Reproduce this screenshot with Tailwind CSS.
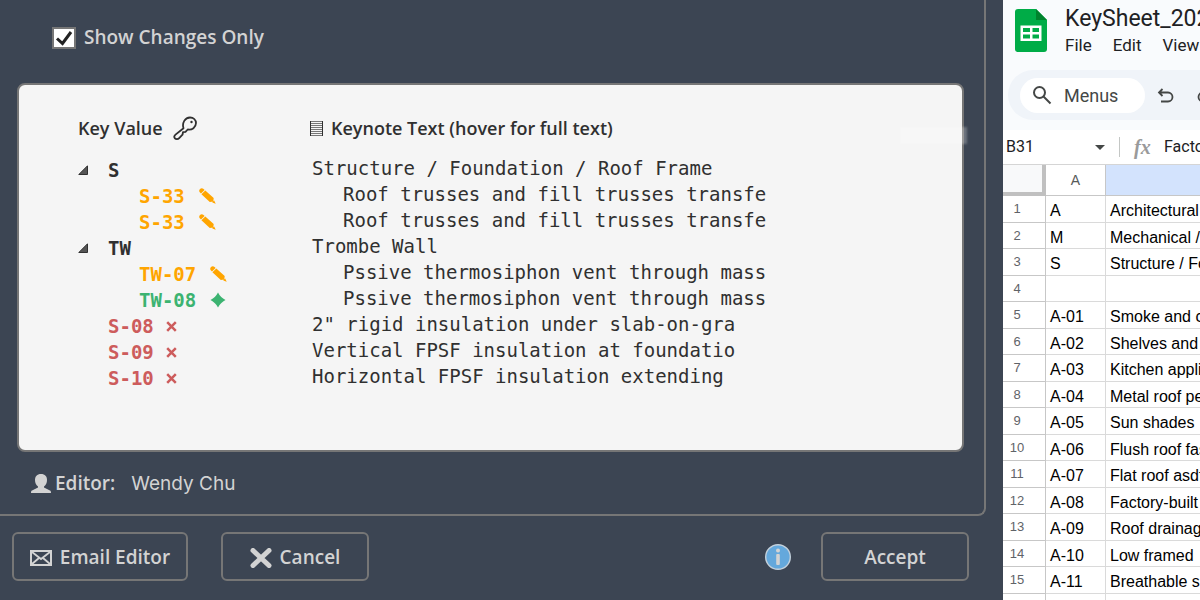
<!DOCTYPE html>
<html lang="en">
<head>
  <meta charset="UTF-8" />
  <meta name="viewport" content="width=device-width, initial-scale=1.0"/>
  <title>Keynote Changes</title>
  <script src="https://cdn.jsdelivr.net/npm/@tailwindcss/browser@4"></script>
</head>
<body class="flex h-screen overflow-hidden bg-white font-['Open_Sans','Noto_Sans',sans-serif]">

  <!-- Review dialog -->
  <main class="flex flex-1 flex-col min-w-0 bg-[#3c4553] text-[#d3d3d3] text-[19px] font-semibold">
    <section class="flex flex-1 flex-col mr-[17px] pl-[17px] pr-5 border-r-2 border-b-2 border-[#767676] rounded-br-lg">
      <div class="flex items-center h-[83px] pb-2 pl-[35px]">
        <span class="relative flex">
          <input id="changesOnly" type="checkbox" checked class="peer appearance-none w-6 h-[22px] bg-white border-2 border-[#767676]" />
          <svg class="absolute inset-0 w-6 h-[22px] pointer-events-none hidden peer-checked:block" viewBox="0 0 24 22" fill="none" stroke="#222" stroke-width="3">
            <path d="M5 11.500l5.500 5L19 5" />
          </svg>
        </span>
        <label for="changesOnly" class="pl-2">Show Changes Only</label>
      </div>

      <div class="relative flex-1 pt-7 pl-[59px] bg-[#f5f5f5] border-2 border-[#767676] rounded-lg text-[#303030]">
        <table class="w-full table-fixed text-left whitespace-nowrap">
          <colgroup>
            <col class="w-[234px]" />
            <col />
          </colgroup>
          <thead>
            <tr class="h-[30px] text-[18px]">
              <th class="p-0 font-semibold">
                <span class="flex items-center gap-2.5">Key Value
                  <svg class="w-6 h-6" viewBox="0 0 24 24" fill="none" stroke="#303030" stroke-width="1.8" stroke-linejoin="round">
                    <path d="M10.500 12.200C8.800 7 12 1.500 17 1.500c3.500 0 6 2.400 6 5.600 0 4.200-4 7.200-8.300 6.400l-2.200 2.300-2.500.4-.5 2.500-3.300 3.400c-1.300 1.300-3.400 1.200-4.300.2-.9-1-.5-2.700.6-3.700z" />
                    <circle cx="18.500" cy="6" r="1.200" fill="#303030" stroke="none" />
                  </svg>
                </span>
              </th>
              <th class="p-0 font-semibold">
                <span class="flex items-center gap-2 -ml-0.5">
                  <svg class="w-[13px] h-[15px]" viewBox="0 0 13 15" fill="none">
                    <path d="M1 .5h11M1 2.500h11M1 4.500h11M1 6.500h11M1 8.500h11M1 10.500h11M1 12.500h11M1 14.500h11" stroke="#777" />
                    <path d="M.5 0v15M12.500 0v15" stroke="#303030" />
                  </svg>Keynote Text (hover for full text)</span>
              </th>
            </tr>
          </thead>
          <tbody id="keynotes" class="text-[19px] leading-[26px] font-normal font-['DejaVu_Sans_Mono',monospace] before:block before:h-3"></tbody>
        </table>
        <div class="absolute top-[42px] -right-[5px] w-[67px] h-[17px] bg-white/25 blur-[1px]"></div>
      </div>

      <div class="flex items-center h-[62px]">
        <svg class="w-5 h-[19px] ml-3.5 mr-1" viewBox="0 0 20 19" fill="#d3d3d3">
          <path d="M10 0c4 0 6 2.500 6 6 0 3-1 5-3 6.500v1l6 3c.7.400 1 1 1 2.500H0c0-1.500.3-2.100 1-2.500l6-3v-1C5 11 4 9 4 6c0-3.500 2-6 6-6z" />
        </svg>
        <span>Editor:</span>
        <span class="pl-4 pt-0.5 font-['Inter',sans-serif] font-normal">Wendy Chu</span>
      </div>
    </section>

    <footer class="flex items-center h-[84px] pl-3 pr-[34px] pb-[3px]">
      <button class="flex items-center justify-center gap-2 w-44 h-[49px] pt-0.5 border-2 border-[#767676] rounded-md">
        <svg class="w-[22px] h-4" viewBox="0 0 22 16" fill="none" stroke="#d3d3d3" stroke-width="2">
          <path d="M1 1h20v14H1z" />
          <path d="M2 2l9 7 9-7M2 14l7-6M20 14l-7-6" stroke-width="1.800" />
        </svg>
        Email Editor
      </button>
      <button class="flex items-center justify-center gap-2 w-[148px] h-[49px] pt-0.5 ml-[33px] border-2 border-[#767676] rounded-md">
        <svg class="w-[22px] h-5" viewBox="0 0 22 20" fill="none" stroke="#d3d3d3" stroke-width="5" stroke-linecap="round">
          <path d="M3 2.500l16 15M19 2.500l-16 15" />
        </svg>
        Cancel
      </button>
      <button aria-label="Info" class="ml-auto mr-[30px]">
        <svg class="w-[26px] h-[26px]" viewBox="0 0 26 26">
          <circle cx="13" cy="13" r="12.300" fill="#64a8dc" stroke="#c3d0db" stroke-width="1.400" />
          <circle cx="13" cy="6.500" r="2" fill="#d3d3d3" />
          <rect x="11.200" y="10" width="3.600" height="11" rx="1" fill="#d3d3d3" />
        </svg>
      </button>
      <button class="w-[148px] h-[49px] pt-0.5 border-2 border-[#767676] rounded-md">Accept</button>
    </footer>
  </main>

  <!-- Spreadsheet behind the dialog -->
  <aside class="w-[197px] shrink-0 overflow-hidden bg-white text-[#202124] font-['Roboto',sans-serif] whitespace-nowrap">
    <header class="h-[130px] bg-[#f9fbfd]">
      <div class="flex h-[70px] pt-[5px] pl-3">
        <svg class="w-8 h-[43px] mt-1 shrink-0" viewBox="0 0 32 43">
          <path d="M3 0h18l11 11v29a3 3 0 0 1-3 3H3a3 3 0 0 1-3-3V3a3 3 0 0 1 3-3z" fill="#00ac47" />
          <path d="M21 0l11 11H21z" fill="#00832d" />
          <path d="M5.500 16.500h21v15.500h-21zM8 19v4h7v-4zM17.500 19v4H24v-4zM8 25.500v4h7v-4zM17.500 25.500v4H24v-4z" fill="#fff" fill-rule="evenodd" />
        </svg>
        <div class="pl-[18px]">
          <h1 class="text-[23px] leading-[27px]">KeySheet_2023</h1>
          <nav class="flex gap-[21px] text-[17px] leading-[27px]">
            <a href="#">File</a>
            <a href="#">Edit</a>
            <a href="#">View</a>
          </nav>
        </div>
      </div>
      <div class="flex items-center h-[50px] w-[800px] ml-[5px] pl-3 rounded-full bg-[#f0f4f9] text-[#444746]">
        <button class="flex items-center gap-3 w-[125px] h-[35px] pl-3 rounded-full bg-white text-[18px]">
          <svg class="w-5 h-5" viewBox="0 0 20 20" fill="none" stroke="#444746" stroke-width="2">
            <circle cx="7.500" cy="7.500" r="5.500" />
            <path d="M11.500 11.500l7 7" />
          </svg>
          Menus
        </button>
        <button aria-label="Undo" class="ml-3">
          <svg class="w-[18px] h-[18px]" viewBox="0 0 18 18" fill="none" stroke="#444746" stroke-width="1.800">
            <path d="M5.500 3L2 6.500 5.500 10M2 6.500h9a4.500 4.500 0 0 1 0 9H4" />
          </svg>
        </button>
        <button aria-label="Redo" class="ml-[21px]">
          <svg class="w-[18px] h-[18px]" viewBox="0 0 18 18" fill="none" stroke="#444746" stroke-width="1.800">
            <path d="M12.500 3L16 6.500 12.500 10M16 6.500H7a4.500 4.500 0 0 0 0 9h7" />
          </svg>
        </button>
      </div>
    </header>

    <div class="flex items-center h-[35px] pl-[3px] border-b border-[#d5d5d5] text-base">
      <span class="w-[89px] shrink-0">B31</span>
      <svg class="w-2.5 h-[5px] shrink-0" viewBox="0 0 10 5" fill="#444746"><path d="M0 0h10L5 5z" /></svg>
      <span class="w-px h-5 ml-3.5 mr-3.5 shrink-0 bg-[#c4c7c5]"></span>
      <i class="w-[30px] shrink-0 font-['Liberation_Serif',serif] font-bold text-[20px] text-[#9a9a9a]">fx</i>
      <span>Factory-built</span>
    </div>

    <table class="w-full table-fixed border-separate border-spacing-0 font-['Liberation_Sans',sans-serif]">
      <colgroup>
        <col class="w-[43px]" />
        <col class="w-[60px]" />
        <col />
      </colgroup>
      <thead>
        <tr class="h-[31px] text-sm text-[#575a5a]">
          <th class="p-0 bg-[#f8f9fa] border-r-4 border-b-4 border-[#c0c0c0]"></th>
          <th class="p-0 font-normal border-r border-b border-[#c7c7c7]">A</th>
          <th class="p-0 bg-[#d3e3fd] border-b border-[#c7c7c7]"></th>
        </tr>
      </thead>
      <tbody id="sheetRows" class="text-base text-black"></tbody>
    </table>
  </aside>

  <script>
    const pencil = `<svg class="w-[17px] h-4 ml-0.5" viewBox="0 0 17 16" fill="#ffa500"><path d="M.8 1.200Q2.600-.8 4.600 1L5.600 1.900 2 5.600 1 4.500Q-.5 2.800 .8 1.200zM6.300 2.400L14.700 10 14.300 13.600 10.800 13.900 2.400 6.300zM15.200 12.500l1.500 3.200-3.500-1.300z"/></svg>`;
    const star = `<svg class="w-4 h-4 ml-0.5" viewBox="0 0 16 16" fill="#3cb371"><path d="M8 .5Q10.500 5.500 15.500 8 10.500 10.500 8 15.500 5.500 10.500 .5 8 5.500 5.500 8 .5z"/></svg>`;
    const cross = `<svg class="w-[11px] h-[11px]" viewBox="0 0 11 11" fill="none" stroke="#cd5c5c" stroke-width="2.500"><path d="M1.200 1.200l8.600 8.600M9.800 1.200l-8.600 8.600"/></svg>`;
    const arrow = `<svg class="w-2.5 h-2.5 mr-5" viewBox="0 0 10 10" fill="#555" stroke="#303030"><path d="M9.500 .8v8.700H.8z"/></svg>`;

    const styles = {
      group: { cell: 'text-[#303030]', text: '', lead: arrow, mark: '' },
      edited: { cell: 'pl-[61px] text-[#ffa500]', text: 'pl-[31px]', lead: '', mark: pencil },
      added: { cell: 'pl-[61px] text-[#3cb371]', text: 'pl-[31px]', lead: '', mark: star },
      removed: { cell: 'pl-[30px] text-[#cd5c5c]', text: '', lead: '', mark: cross }
    };

    const keynotes = [
      ['group', 'S', 'Structure / Foundation / Roof Frame'],
      ['edited', 'S-33', 'Roof trusses and fill trusses transfe'],
      ['edited', 'S-33', 'Roof trusses and fill trusses transfe'],
      ['group', 'TW', 'Trombe Wall'],
      ['edited', 'TW-07', 'Pssive thermosiphon vent through mass'],
      ['added', 'TW-08', 'Pssive thermosiphon vent through mass'],
      ['removed', 'S-08', '2" rigid insulation under slab-on-gra'],
      ['removed', 'S-09', 'Vertical FPSF insulation at foundatio'],
      ['removed', 'S-10', 'Horizontal FPSF insulation extending']
    ];

    document.getElementById('keynotes').innerHTML = keynotes.map(([kind, key, text]) => {
      const s = styles[kind];
      return `<tr class="h-[26px]">
        <td class="p-0"><div class="flex items-center pt-1 h-[26px] font-bold ${s.cell}">${s.lead}<span class="mr-3">${key}</span>${s.mark}</div></td>
        <td class="p-0"><div class="h-[26px] ${s.text}">${text}</div></td>
      </tr>`;
    }).join('');

    const rows = [
      ['A', 'Architectural'],
      ['M', 'Mechanical /'],
      ['S', 'Structure / Foundation'],
      ['', ''],
      ['A-01', 'Smoke and carbon'],
      ['A-02', 'Shelves and'],
      ['A-03', 'Kitchen appliances'],
      ['A-04', 'Metal roof perimeter'],
      ['A-05', 'Sun shades'],
      ['A-06', 'Flush roof fascia'],
      ['A-07', 'Flat roof asdf'],
      ['A-08', 'Factory-built'],
      ['A-09', 'Roof drainage'],
      ['A-10', 'Low framed'],
      ['A-11', 'Breathable s'],
      ['', '']
    ];

    document.getElementById('sheetRows').innerHTML = rows.map(([key, text], i) => `
      <tr class="odd:h-[27px] even:h-[26px] leading-5">
        <td class="p-0 pr-3.5 text-center text-[13px] text-[#5f6368] border-r border-b border-[#c7c7c7]">${i < 15 ? i + 1 : ''}</td>
        <td class="p-0 pl-1 pt-1 border-r border-b border-[#dadada]">${key}</td>
        <td class="p-0 pl-1 pt-1 border-b border-[#dadada] overflow-hidden">${text}</td>
      </tr>`).join('');
  </script>
</body>
</html>
